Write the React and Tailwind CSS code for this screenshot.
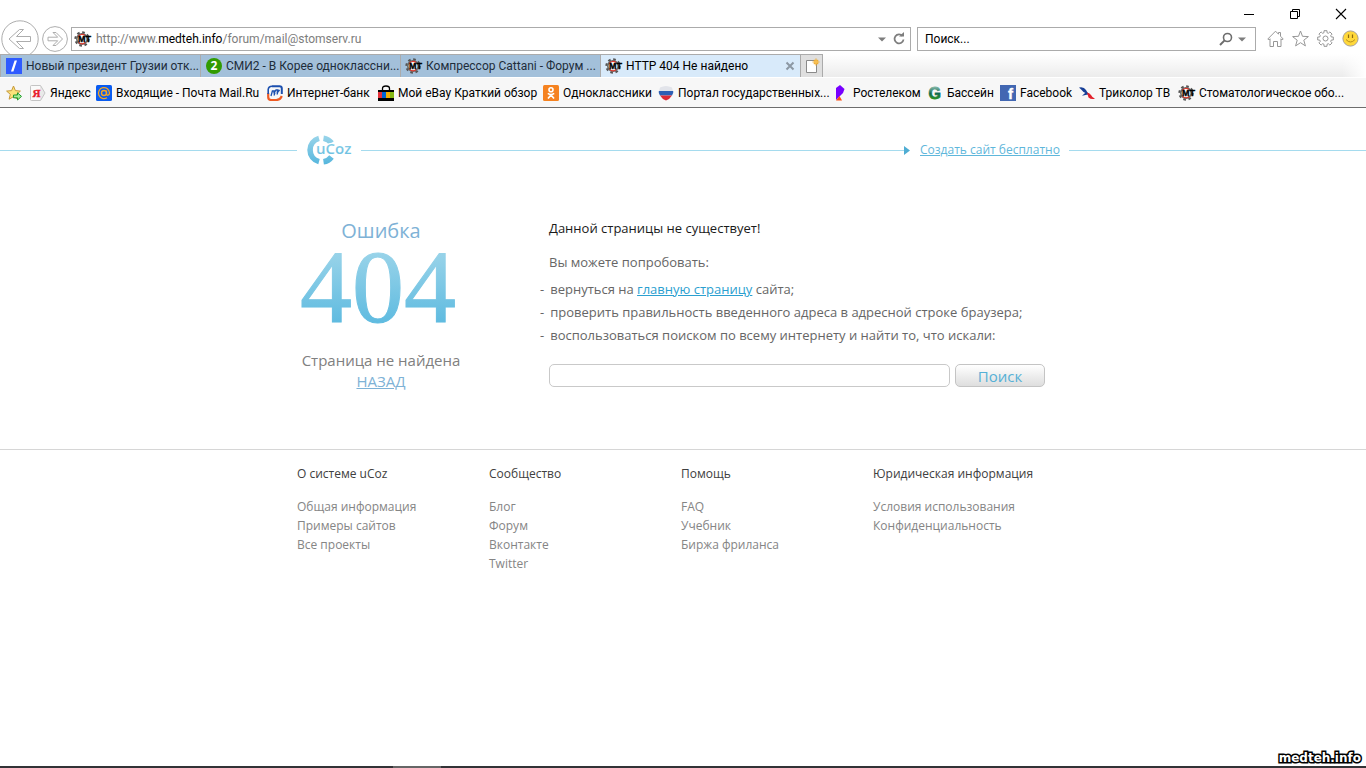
const UI_FONT = "font-['Roboto','Noto_Sans',sans-serif]";

const MtIcon = () => (
  <svg viewBox="0 0 16 16" className="h-4 w-4 shrink-0 overflow-visible" aria-hidden="true">
    <circle cx="7" cy="8" r="6.6" fill="none" stroke="#555" strokeWidth="2.2" strokeDasharray="2.6 2.58" />
    <circle cx="7" cy="8" r="5.2" fill="#fff" stroke="#666" strokeWidth="1.6" />
    <path d="M3.4 5.4A4.6 4.6 0 0 1 10 4.4M3.6 11.4A4.6 4.6 0 0 0 10.4 11.4" fill="none" stroke="#e03a2e" strokeWidth="1.2" />
    <text x="3" y="11" fontSize="9" fontWeight="bold" fontFamily="Liberation Sans" fill="#000" stroke="#000" strokeWidth="0.400">
      MT
    </text>
  </svg>
);

const SlashIcon = () => (
  <svg viewBox="0 0 16 16" className="h-4 w-4 shrink-0" aria-hidden="true">
    <rect width="16" height="16" fill="#2f5bff" />
    <path d="M8.6 2.5H11L7.4 13.5H5z" fill="#fff" />
  </svg>
);

const TwoIcon = () => (
  <span className="flex h-4 w-4 shrink-0 items-center justify-center rounded-full bg-[#319b00] font-['Open_Sans',sans-serif] text-[12px] leading-4 font-bold text-white">
    2
  </span>
);

const AddFavIcon = () => (
  <svg viewBox="0 0 16 16" className="h-4 w-4 shrink-0" aria-hidden="true">
    <path d="M7.5 1l1.9 4.600 5 .5-3.700 3.200 1.100 4.900-4.300-2.500-4.400 2.500 1.200-4.900L.6 6.100l5-.5z" fill="#fbe27a" stroke="#c79a3c" />
    <path d="M7.500 10h4V7.800L15.500 11.400l-4 3.600v-2.200h-4z" fill="#a9ea9a" stroke="#1f9c2c" />
  </svg>
);

const YandexIcon = () => (
  <svg viewBox="0 0 16 16" className="h-4 w-4 shrink-0" aria-hidden="true">
    <path d="M1.5.5h9L15 8l-4.500 7.500h-9a1 1 0 0 1-1-1v-13a1 1 0 0 1 1-1z" fill="#e9e9e9" stroke="#c4c4c4" />
    <path d="M1 1h9v14H1z" fill="#fafafa" />
    <text x="2.500" y="12" fontSize="11" fontWeight="bold" fontFamily="Liberation Serif" fill="#e8202a" stroke="#e8202a" strokeWidth="0.400">
      Я
    </text>
  </svg>
);

const MailIcon = () => (
  <svg viewBox="0 0 16 16" className="h-4 w-4 shrink-0" aria-hidden="true">
    <rect width="16" height="16" rx="1.500" fill="#0a5cf0" />
    <circle cx="8" cy="8" r="2.500" fill="none" stroke="#f5a623" strokeWidth="1.400" />
    <path d="M10.500 5.500v3.500c0 2 3 1.600 3-1A5.500 5.500 0 1 0 11 12.700" fill="none" stroke="#f5a623" strokeWidth="1.300" />
  </svg>
);

const BankIcon = () => (
  <svg viewBox="0 0 16 16" className="h-4 w-4 shrink-0" aria-hidden="true">
    <path d="M5 1.200h7.500a2.300 2.300 0 0 1 2.300 2.300V9" fill="none" stroke="#1b4fae" strokeWidth="2" />
    <path d="M1.200 8V12q0 3 3 3h5q4 0 5.600-4" fill="none" stroke="#ee5a22" strokeWidth="2.200" />
    <path d="M1.200 9V4.500Q1.500 1.200 5 1.200" fill="none" stroke="#1b4fae" strokeWidth="1.600" />
    <path d="M4 11l1.400-5h2L6.800 8.500 9 5h1.800L10 7.800 12.600 5M7 10.500l1-3M10 9.500l1-3" fill="none" stroke="#1b4fae" strokeWidth="1.300" />
  </svg>
);

const EbayIcon = () => (
  <svg viewBox="0 0 16 16" className="h-4 w-4 shrink-0" aria-hidden="true">
    <path d="M4.500 6V3.500Q4.500 1 8 1t3.500 2.500V6" fill="none" stroke="#000" strokeWidth="1.300" />
    <rect y="5" width="16" height="2" fill="#000" />
    <rect y="7" width="4" height="6" fill="#e5323a" />
    <rect x="4" y="7" width="4" height="6" fill="#0064d3" />
    <rect x="8" y="7" width="4" height="6" fill="#f5af02" />
    <rect x="12" y="7" width="4" height="6" fill="#86b817" />
    <rect y="13" width="16" height="3" fill="#000" />
  </svg>
);

const OkIcon = () => (
  <svg viewBox="0 0 16 16" className="h-4 w-4 shrink-0" aria-hidden="true">
    <rect width="16" height="16" rx="1.500" fill="#f58220" />
    <circle cx="8" cy="4.800" r="2" fill="none" stroke="#fff" strokeWidth="1.600" />
    <path d="M4.800 8.400Q8 10.600 11.200 8.400M8 10L5 13.500M8 10l3 3.500" fill="none" stroke="#fff" strokeWidth="1.700" />
  </svg>
);

const GosIcon = () => (
  <svg viewBox="0 0 16 16" className="h-4 w-4 shrink-0" aria-hidden="true">
    <path d="M2 2.500Q8-.5 14 2.500L15 6H1z" fill="#e2e4ea" />
    <path d="M.8 6h14.400v2L14 10.500H2L.8 8z" fill="#2d5fb4" />
    <path d="M2 10.500h12Q12 14 8 15.500 4 14 2 10.500z" fill="#dd2a35" />
  </svg>
);

const RostelecomIcon = () => (
  <svg viewBox="0 0 16 16" className="h-4 w-4 shrink-0" aria-hidden="true">
    <path d="M3 3l4-3 4.500 4-1.500 4-4 4-3 3z" fill="#7700ff" />
    <path d="M3 15.500L6.500 11l2.500 4.500z" fill="#ff4f12" />
  </svg>
);

const GreenGIcon = () => (
  <svg viewBox="0 0 16 16" className="h-4 w-4 shrink-0" aria-hidden="true">
    <defs>
      <linearGradient id="green-g" x1="0" y1="2" x2="0" y2="15" gradientUnits="userSpaceOnUse">
        <stop offset="0" stopColor="#7fb5a4" />
        <stop offset="0.5" stopColor="#136a52" />
        <stop offset="1" stopColor="#2f9a1c" />
      </linearGradient>
    </defs>
    <text x="1.500" y="14" fontSize="16" fontWeight="bold" fontFamily="Liberation Sans" fill="url(#green-g)" stroke="url(#green-g)" strokeWidth="0.800">
      G
    </text>
  </svg>
);

const FacebookIcon = () => (
  <svg viewBox="0 0 16 16" className="h-4 w-4 shrink-0" aria-hidden="true">
    <rect width="16" height="16" fill="#4267b2" />
    <text x="8" y="14" fontSize="15" fontWeight="bold" fontFamily="Liberation Sans" fill="#fff" stroke="#fff" strokeWidth="0.400">
      f
    </text>
  </svg>
);

const TricolorIcon = () => (
  <svg viewBox="0 0 16 16" className="h-4 w-4 shrink-0" aria-hidden="true">
    <path d="M0 2.500q5-1 7 2.500l2.500 4.500-5-2.500Q2 4 0 2.500z" fill="#173f97" />
    <path d="M3 10.800l4.500-4 3 2.500-4 .8z" fill="#173f97" />
    <path d="M8 7.500q3 .5 4 2.500 1.500 3 4 3.800-4 1-6.500-1.300z" fill="#e2202a" />
  </svg>
);

const NewTabIcon = () => (
  <svg viewBox="0 0 16 16" className="h-4 w-4" aria-hidden="true">
    <path d="M2.500 2.500h10v12h-10z" fill="#fff" stroke="#8a8a8a" />
    <path d="M12 .5v7M8.500 4h7M9.800 1.800l4.400 4.400M14.200 1.800L9.800 6.200" stroke="#f0a828" strokeWidth="1.100" />
    <circle cx="12" cy="4" r="1.800" fill="#f8c050" />
  </svg>
);

const TABS = [
  { title: 'Новый президент Грузии отк...', Icon: SlashIcon },
  { title: 'СМИ2 - В Корее одноклассни...', Icon: TwoIcon },
  { title: 'Компрессор Cattani - Форум ...', Icon: MtIcon },
  { title: 'HTTP 404 Не найдено', Icon: MtIcon, active: true },
];

const FAVORITES = [
  { title: 'Яндекс', Icon: YandexIcon, width: 'w-[66px]' },
  { title: 'Входящие - Почта Mail.Ru', Icon: MailIcon, width: 'w-[171px]' },
  { title: 'Интернет-банк', Icon: BankIcon, width: 'w-[111px]' },
  { title: 'Мой eBay Краткий обзор', Icon: EbayIcon, width: 'w-[165px]' },
  { title: 'Одноклассники', Icon: OkIcon, width: 'w-[115px]' },
  { title: 'Портал государственных...', Icon: GosIcon, width: 'w-[175px]' },
  { title: 'Ростелеком', Icon: RostelecomIcon, width: 'w-[94px]' },
  { title: 'Бассейн', Icon: GreenGIcon, width: 'w-[73px]' },
  { title: 'Facebook', Icon: FacebookIcon, width: 'w-[79px]' },
  { title: 'Триколор ТВ', Icon: TricolorIcon, width: 'w-[100px]' },
  { title: 'Стоматологическое обо...', Icon: MtIcon, width: 'w-[172px]' },
];

const FOOTER = [
  { title: 'О системе uCoz', links: ['Общая информация', 'Примеры сайтов', 'Все проекты'] },
  { title: 'Сообщество', links: ['Блог', 'Форум', 'Вконтакте', 'Twitter'] },
  { title: 'Помощь', links: ['FAQ', 'Учебник', 'Биржа фриланса'] },
  { title: 'Юридическая информация', links: ['Условия использования', 'Конфиденциальность'] },
];

const WindowControls = () => (
  <div className="flex h-[27px] items-center justify-end gap-[34px] pr-[19px]">
    <button type="button" aria-label="Свернуть">
      <svg viewBox="0 0 12 12" className="h-3 w-3">
        <path d="M1 6.500h10" stroke="#000" />
      </svg>
    </button>
    <button type="button" aria-label="Восстановить">
      <svg viewBox="0 0 12 12" className="h-3 w-3" fill="none" stroke="#000">
        <path d="M1.500 3.500h7v7h-7zM3.500 3.500v-2h7v7h-2" />
      </svg>
    </button>
    <button type="button" aria-label="Закрыть">
      <svg viewBox="0 0 12 12" className="h-3 w-3">
        <path d="M1 1l10 10M11 1L1 11" stroke="#000" strokeWidth="1.100" />
      </svg>
    </button>
  </div>
);

const Dropdown = () => (
  <svg viewBox="0 0 8 5" className="h-[5px] w-2" aria-hidden="true">
    <path d="M0 .5h8L4 4.500z" fill="#7d7d7d" />
  </svg>
);

const AddressBar = () => (
  <div className="mb-[3px] flex h-6 items-center">
    <button type="button" aria-label="Назад" className="ml-px shrink-0">
      <svg viewBox="0 0 38 38" className="h-[38px] w-[38px]" fill="none" stroke="#adadad">
        <circle cx="19" cy="19" r="18.200" fill="#fff" />
        <path d="M8 19L18.500 9.500h4l-7 7H29.500v5h-14l7 7h-4z" />
      </svg>
    </button>
    <button type="button" aria-label="Вперед" className="ml-[3px] shrink-0">
      <svg viewBox="0 0 26 26" className="h-[26px] w-[26px]" fill="none" stroke="#adadad">
        <circle cx="13" cy="13" r="12.400" fill="#fff" />
        <path d="M20.500 13L14 6.500h-3l4.700 4.700H6v3.600h9.700L11 19.500h3z" />
      </svg>
    </button>
    <div className="ml-[3px] flex h-6 min-w-0 flex-1 items-center border border-[#ababab] bg-white pr-1 pl-[3px]">
      <MtIcon />
      <label className="relative ml-[5px] flex-1 text-[12px] whitespace-nowrap text-[#7d7d7d]">
        <span aria-hidden="true">
          http://www.<span className="text-black">medteh.info</span>/forum/mail@stomserv.ru
        </span>
        <input type="text" aria-label="Адрес" className="absolute inset-0 w-full bg-transparent outline-none" />
      </label>
      <button type="button" aria-label="Журнал адресов" className="mr-[6px]">
        <Dropdown />
      </button>
      <button type="button" aria-label="Обновить">
        <svg viewBox="0 0 14 14" className="h-[14px] w-[14px]" fill="none" stroke="#7d7d7d" strokeWidth="1.800">
          <path d="M10.500 4A4.500 4.500 0 1 0 11.500 7.500" />
          <path d="M7 4.500h5V0z" fill="#7d7d7d" stroke="none" />
        </svg>
      </button>
    </div>
    <div className="ml-[6px] flex h-6 w-[339px] items-center border border-[#ababab] bg-white pr-[9px] pl-[7px]">
      <input
        type="text"
        aria-label="Поиск в интернете"
        placeholder="Поиск..."
        className="min-w-0 flex-1 text-[12px] text-black outline-none placeholder:text-black"
      />
      <button type="button" aria-label="Искать" className="mr-[5px]">
        <svg viewBox="0 0 14 14" className="h-[14px] w-[14px]" fill="none" stroke="#6d6d6d" strokeWidth="1.600">
          <circle cx="8.500" cy="5.500" r="4" />
          <path d="M5.600 8.400L1 13" strokeWidth="2" />
        </svg>
      </button>
      <button type="button" aria-label="Поисковые службы">
        <Dropdown />
      </button>
    </div>
    <div className="ml-[11px] flex shrink-0 items-center gap-2 pr-[7px] pb-[2px]">
      <button type="button" aria-label="Домашняя страница">
        <svg viewBox="0 0 17 17" className="block h-[17px] w-[17px]" fill="none" stroke="#979797">
          <path d="M.8 9L8.500 1.200l3 3V2.500h2v3.700L16.200 9l-1 1-1.200-1.200v7.700h-3.500v-5h-4v5H3V8.800L1.800 10z" />
        </svg>
      </button>
      <button type="button" aria-label="Избранное">
        <svg viewBox="0 0 17 17" className="block h-[17px] w-[17px]" fill="none" stroke="#979797">
          <path d="M8.500 1l2 5.300 5.900.3-4.600 3.600 1.600 5.700-4.900-3.200-4.900 3.200 1.600-5.700L.6 6.600l5.900-.3z" />
        </svg>
      </button>
      <button type="button" aria-label="Сервис">
        <svg viewBox="0 0 17 17" className="block h-[17px] w-[17px]" fill="none" stroke="#979797">
          <path d="M7 .7h3v2l1.400.6 1.500-1.400 2.200 2.200-1.400 1.500.6 1.400h2v3h-2l-.6 1.400 1.400 1.500-2.200 2.200-1.500-1.400-1.400.6v2H7v-2l-1.400-.6-1.500 1.400-2.200-2.200 1.400-1.500L2.700 10h-2V7h2l.6-1.400-1.400-1.500 2.200-2.200 1.500 1.400L7 2.700z" />
          <circle cx="8.500" cy="8.500" r="2.500" />
        </svg>
      </button>
      <button type="button" aria-label="Отправить отзыв">
        <svg viewBox="0 0 17 17" className="block h-[17px] w-[17px]">
          <circle cx="8.500" cy="8.500" r="7.600" fill="#ffd83b" stroke="#a8a095" />
          <path d="M6.500 4.500v3.500M10.500 4.500v3.500" stroke="#8d6b10" strokeWidth="1.200" />
          <path d="M4 9.500q4.500 5 9 0" fill="none" stroke="#b58d1c" />
        </svg>
      </button>
    </div>
  </div>
);

const TabStrip = () => (
  <div className="relative flex h-[23px] bg-linear-to-b from-white to-[#ececec]">
    {TABS.map(({ title, Icon, active }) => (
      <div
        key={title}
        className={`flex w-[200px] items-center border-t border-l border-[#ababab] pr-1 pl-[5px] ${
          active ? 'bg-[#d8eafa] text-black' : 'bg-[#a3c0da] text-[#1e2d3a]'
        }`}
      >
        <button type="button" className="flex min-w-0 flex-1 items-center gap-1 text-left text-[12px] whitespace-nowrap">
          <Icon />
          <span>{title}</span>
        </button>
        {active && (
          <button type="button" aria-label="Закрыть вкладку">
            <svg viewBox="0 0 12 12" className="h-3 w-3">
              <path d="M2.500 2.500l7 7M9.500 2.500l-7 7" stroke="#8c98a3" strokeWidth="2" />
            </svg>
          </button>
        )}
      </div>
    ))}
    <button
      type="button"
      aria-label="Создать вкладку"
      className="flex w-[23px] items-center justify-center border border-b-0 border-[#ababab] bg-[#dfdfdf]"
    >
      <NewTabIcon />
    </button>
    <div className="flex-1" />
    <div className="w-6 bg-linear-to-r from-transparent to-white" />
  </div>
);

const FavoritesBar = () => (
  <nav className="flex h-[31px] items-center overflow-hidden border-t border-b border-t-white border-b-[#6d6d6d] bg-[#f7f7f7] pl-[6px]">
    <button type="button" aria-label="Добавить в избранное" className="mr-2">
      <AddFavIcon />
    </button>
    {FAVORITES.map(({ title, Icon, width }) => (
      <a key={title} href="#" className={`flex shrink-0 items-center gap-1 text-[12px] whitespace-nowrap text-black ${width}`}>
        <Icon />
        {title}
      </a>
    ))}
  </nav>
);

const UcozLogo = () => (
  <svg viewBox="0 0 48 30" className="h-[30px] w-12" role="img" aria-label="uCoz">
    <defs>
      <linearGradient id="ucoz" x1="0" y1="0" x2="0" y2="30" gradientUnits="userSpaceOnUse">
        <stop offset="0" stopColor="#9bd5ea" />
        <stop offset="1" stopColor="#55b6dd" />
      </linearGradient>
    </defs>
    <path d="M14 3.400A12 12 0 0 0 14 26.600M18.500 3.200A12 12 0 0 1 26.500 8M18.500 26.800A12 12 0 0 0 26.500 22" fill="none" stroke="url(#ucoz)" strokeWidth="5.600" />
    <text x="11" y="19" fontSize="15" fontWeight="600" fontFamily="Open Sans" fill="url(#ucoz)" stroke="#fff" strokeWidth="2.500" paintOrder="stroke">
      uCoz
    </text>
  </svg>
);

const ErrorCode = () => (
  <svg viewBox="0 0 168 90" className="h-[90px] w-[168px] overflow-visible">
    <defs>
      <linearGradient id="error-code" x1="0" y1="10" x2="0" y2="80" gradientUnits="userSpaceOnUse">
        <stop offset="0" stopColor="#98d3e9" />
        <stop offset="1" stopColor="#5fbbe0" />
      </linearGradient>
    </defs>
    <text
      x="81"
      y="79"
      fontSize="104"
      textAnchor="middle"
      fontFamily="Liberation Serif"
      fill="url(#error-code)"
      stroke="url(#error-code)"
      strokeWidth="1"
    >
      404
    </text>
  </svg>
);

const SiteHeader = () => (
  <header className="flex items-center pt-[27px]">
    <div className="h-px flex-1 bg-[#a5dbee]" />
    <div className="flex w-[772px] items-center">
      <a href="#" className="flex w-16 shrink-0 justify-center">
        <UcozLogo />
      </a>
      <div className="h-px flex-1 bg-[#a5dbee]" />
      <svg viewBox="0 0 6 9" className="mr-[10px] h-[9px] w-[6px]" aria-hidden="true">
        <path d="M0 0l6 4.500L0 9z" fill="#4fadd3" />
      </svg>
      <a href="#" className="mr-[5px] w-36 text-[12px] whitespace-nowrap text-[#5fb7db] underline">
        Создать сайт бесплатно
      </a>
    </div>
    <div className="h-px flex-1 bg-[#a5dbee]" />
  </header>
);

const ErrorContent = () => (
  <main className="mx-auto flex w-[772px] pt-[54px] pb-[57px]">
    <div className="flex w-[168px] flex-col items-center">
      <h1 className="flex flex-col items-center">
        <span className="text-[20px] leading-[24px] text-[#7eb2d6]">Ошибка</span>
        <ErrorCode />
      </h1>
      <p className="mt-[17px] text-[15px] leading-[21px] whitespace-nowrap text-[#808080]">Страница не найдена</p>
      <a href="#" className="text-[15px] leading-[21px] text-[#7eb2d6] underline">
        НАЗАД
      </a>
    </div>
    <div className="ml-[84px] flex-1 text-[13px] whitespace-nowrap text-[#666]">
      <h2 className="leading-[18px] text-[#1a1a1a]">Данной страницы не существует!</h2>
      <p className="mt-4 leading-[18px]">Вы можете попробовать:</p>
      <ul className="mt-[7px] -ml-[9px] leading-[23px]">
        <li>
          <span className="mr-[6px]">-</span>
          вернуться на{' '}
          <a href="#" className="text-[#2ba0d0] underline">
            главную страницу
          </a>{' '}
          сайта;
        </li>
        <li>
          <span className="mr-[6px]">-</span>
          проверить правильность введенного адреса в адресной строке браузера;
        </li>
        <li>
          <span className="mr-[6px]">-</span>
          воспользоваться поиском по всему интернету и найти то, что искали:
        </li>
      </ul>
      <form className="mt-[17px] flex gap-[5px]" onSubmit={(e) => e.preventDefault()}>
        <input
          type="text"
          aria-label="Поиск по интернету"
          className="h-[23px] w-[401px] rounded-[5px] border border-[#c9c9c9] px-2 outline-none"
        />
        <button
          type="submit"
          className="h-[23px] w-[90px] rounded-[5px] border border-[#c4c4c4] bg-linear-to-b from-white to-[#dedede] text-[15px] leading-[20px] text-[#55b0d6]"
        >
          Поиск
        </button>
      </form>
    </div>
  </main>
);

const SiteFooter = () => (
  <footer className="border-t border-[#d6d6d6] pt-[14px]">
    <div className="mx-auto grid w-[772px] grid-cols-[192px_192px_192px_1fr] text-[12px]">
      {FOOTER.map(({ title, links }) => (
        <section key={title}>
          <h3 className="leading-[19px] text-[#404040]">{title}</h3>
          <ul className="mt-[14px] leading-[19px] text-[#858585]">
            {links.map((link) => (
              <li key={link}>
                <a href="#">{link}</a>
              </li>
            ))}
          </ul>
        </section>
      ))}
    </div>
  </footer>
);

const App = () => (
  <div className="flex min-h-screen flex-col bg-white font-['Open_Sans','Noto_Sans',sans-serif]">
    <div className={UI_FONT}>
      <WindowControls />
      <AddressBar />
      <TabStrip />
      <FavoritesBar />
    </div>
    <SiteHeader />
    <ErrorContent />
    <SiteFooter />
    <div className="mt-auto flex justify-end pr-[5px]">
      <span className="font-['DejaVu_Sans',sans-serif] text-[12px] leading-[16px] font-bold text-white [-webkit-text-stroke:3px_#000] [paint-order:stroke_fill]">
        medteh.info
      </span>
    </div>
    <div className="flex h-[2px] bg-[#333336]">
      <div className="ml-[393px] w-12 bg-[#666]" />
    </div>
  </div>
);

export default App;
